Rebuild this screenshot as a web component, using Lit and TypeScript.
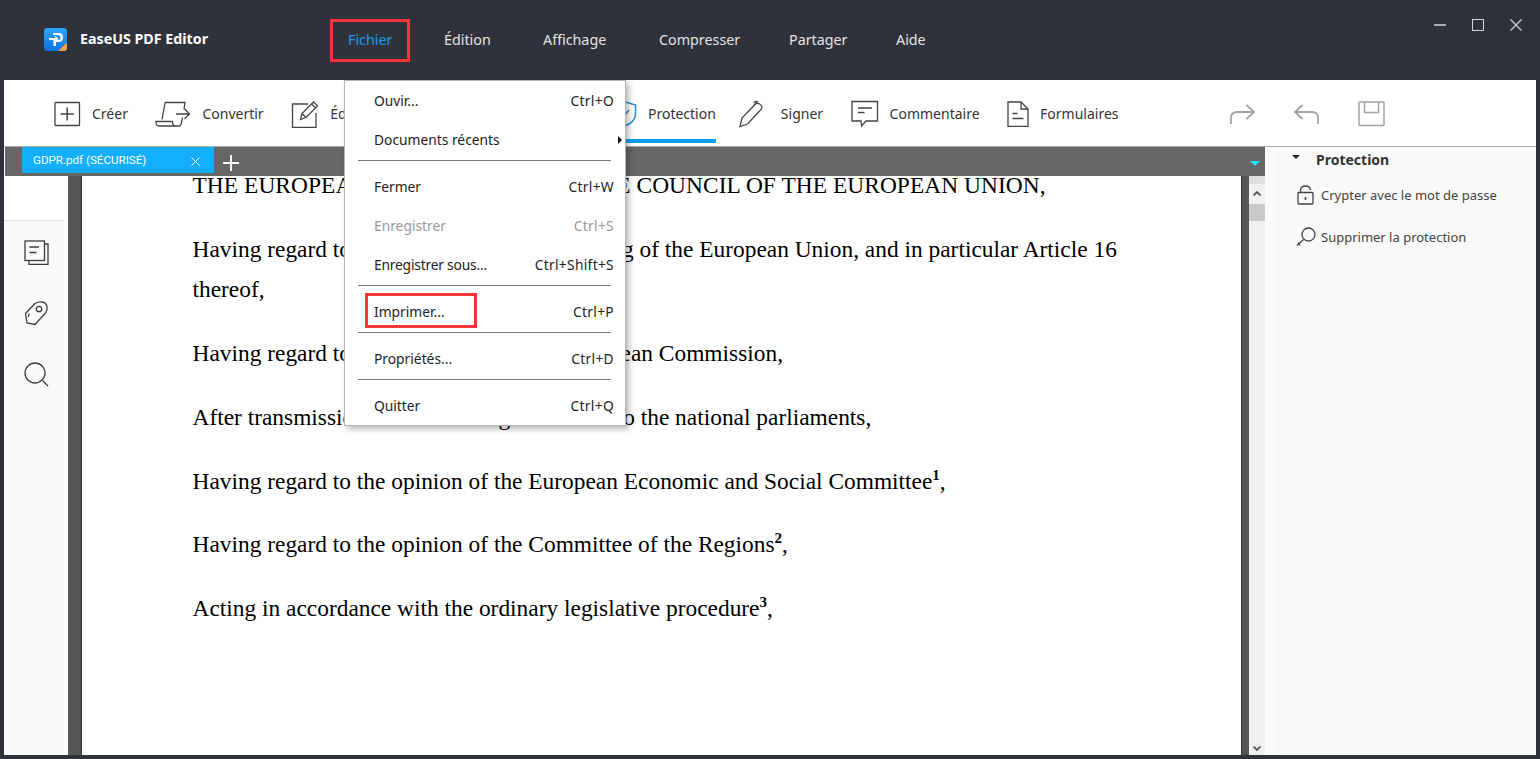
import { LitElement, html, css, svg } from "lit";
import { customElement } from "lit/decorators.js";

const S = (w: number, h: number, body: unknown, vb = "") =>
  html`<svg width=${w} height=${h} viewBox=${vb || `0 0 ${w} ${h}`} fill="none" stroke="currentColor" stroke-width="1.3">${body}</svg>`;

const icons = {
  create: S(27, 26, svg`<rect x="1" y="1.5" width="24.5" height="23" rx=".5"/><path d="M13.2 6.5v13M6.5 13h13.4" stroke-width="1.5"/>`),
  convert: S(36, 26, svg`<path d="M7 18.500 10.200 1.500H30l-1 7M27.600 16.500 26 23.500q-.5 1.500-2 1.500H4q-3 0-3-3.500V20.500h16.500q0 4.500 3 4.500"/><path d="M21 13h13M29.500 8l5 5-5 5"/>`),
  edit: S(28, 28, svg`<path d="M17 4H1.500v23.500h23.500V13"/><path d="M9.500 19.500 11 13.500 22.500 2l4 4-11.500 11.500zM11 13.500l4 4M20.500 4l4 4"/>`),
  shield: S(26, 28, svg`<path d="M13 1.500 24.500 5v9q0 8-11.500 12.500Q1.500 22 1.500 14V5z" stroke-width="1.600"/><path d="M8 13l4 4 6-7" stroke-width="1.600"/>`),
  sign: S(31, 28, svg`<path d="M1 26.500 3 18 16 4.500q2-2 4.500-.5t2.500 3q0 1.500-1.500 3L8.500 24zM1 26.500l3-1"/><path d="M14.500 2.500 17.500 1M19 1l-4 4"/>`),
  comment: S(28, 28, svg`<path d="M1 1.500h25.500v19.500H15l-4.500 5-.5-5H1z"/><path d="M7 8h14M7 12.500h6.500" stroke-width="1.500"/>`),
  form: S(22, 26, svg`<path d="M1 1h13l7 7v17.500H1zM14 1v7h7"/><path d="M5.500 12.500h5M5.500 17.500h11" stroke-width="1.500"/>`),
  redo: S(26, 22, svg`<path d="M1 21v-6q0-6 6-6h17M16.500 2l7.500 7-7.500 7" stroke-width="1.800"/>`),
  undo: S(26, 22, svg`<path d="M25 21v-6q0-6-6-6H2M9.500 2 2 9l7.500 7" stroke-width="1.800"/>`),
  save: S(27, 26, svg`<rect x="1" y="1" width="25" height="23.500" rx="1" stroke-width="1.500"/><path d="M6.500 1v10.500h14V1" stroke-width="1.500"/>`),
  pages: S(25, 25, svg`<path d="M20.500 4H24v20.500H5V21"/><rect x="1" y="1" width="19.500" height="19.500"/><path d="M5.500 7h9.500M5.500 12.500h7" stroke-width="1.500"/>`),
  tag: S(24, 25, svg`<path d="M1.500 12.500 11 2.500Q14 .7 18.500 1q4 1 4.500 5 .5 4-2 6.500L11 23.500l-8-1.500z"/><circle cx="15" cy="8" r="2.700"/><path d="M5.500 12.500Q4.500 14 4.500 16"/>`),
  search: S(25, 26, svg`<circle cx="11" cy="11" r="10"/><path d="M18.500 18.500 24 24"/>`),
  lock: S(17, 20, svg`<rect x="1" y="7.500" width="15" height="11.500" rx=".8"/><path d="M3.500 7.500V5q.5-4 5-4t5 4"/><path d="M8.500 12v3" stroke-width="1.600"/>`),
  unprotect: S(20, 20, svg`<circle cx="12.500" cy="7.500" r="6.500"/><path d="M7.500 12.500 1 18.500M2 15.500l2 3"/>`),
};

const logo = html`<svg width="23" height="23" viewBox="0 0 23 23">
  <defs><linearGradient id="lg" x1="0" y1="0" x2="0" y2="1"><stop offset="0" stop-color="#2ba6f7"/><stop offset="1" stop-color="#0b71e6"/></linearGradient></defs>
  <rect width="23" height="23" rx="3.500" fill="url(#lg)"/>
  <path d="M9 5h5.500q4.500 0 4.500 4.500t-4.500 4.500H12v4H9.500v-6h5q2 0 2-2.500t-2-2.500H9z" fill="#fff"/>
  <path d="M5 10h7l-2-2 1.500 0 3 3-3 3H10l2-2H5z" fill="#fff"/>
  <path d="M23 14.500V19.500Q23 23 19.500 23H14z" fill="#f2a33c"/>
</svg>`;

const nav = ["Fichier", "Édition", "Affichage", "Compresser", "Partager", "Aide"];

const tools = [
  { i: icons.create, t: "Créer", cls: "" },
  { i: icons.convert, t: "Convertir", cls: "" },
  { i: icons.edit, t: "Édition", cls: "" },
  { i: icons.shield, t: "Protection", cls: "active" },
  { i: icons.sign, t: "Signer", cls: "" },
  { i: icons.comment, t: "Commentaire", cls: "" },
  { i: icons.form, t: "Formulaires", cls: "" },
];

type Row = { l: string; k?: string; dis?: boolean; sub?: boolean; red?: boolean; tight?: boolean } | "sep";
const menu: Row[] = [
  { l: "Ouvir...", k: "Ctrl+O" },
  { l: "Documents récents", sub: true },
  "sep",
  { l: "Fermer", k: "Ctrl+W" },
  { l: "Enregistrer", k: "Ctrl+S", dis: true },
  { l: "Enregistrer sous...", k: "Ctrl+Shift+S", tight: true },
  "sep",
  { l: "Imprimer...", k: "Ctrl+P", red: true },
  "sep",
  { l: "Propriétés...", k: "Ctrl+D" },
  "sep",
  { l: "Quitter", k: "Ctrl+Q" },
];

@customElement("app-root")
export class AppRoot extends LitElement {
  static styles = css`
    :host {
      display: flex;
      flex-direction: column;
      position: relative;
      width: 1540px;
      height: 759px;
      overflow: hidden;
      background: #2f323b;
      font-family: "Noto Sans", "Open Sans", sans-serif;
      font-size: 14px;
      color: #333;
    }
    svg { display: block; flex: none; }

    .title { height: 80px; flex: none; display: flex; align-items: center; padding: 0 18px 0 44px; color: #e3e3e3; }
    .brand { display: flex; align-items: center; gap: 13px; width: 304px; flex: none; margin-top: -1px; color: #fff; font-weight: 700; font-size: 14.25px; }
    .brand span { position: relative; top: -1px; }
    .nav { display: grid; grid-template-columns: 96px 99px 116px 130px 107px auto; font-size: 14.3px; margin-top: -2px; }
    .nav span { position: relative; }
    .nav .cur { color: #1d9bf0; }
    .redbox { position: absolute; border: 3px solid #f6353a; box-sizing: border-box; pointer-events: none; }
    .nav .redbox { left: -18px; top: -11px; width: 80px; height: 43px; }
    .win { margin-left: auto; display: flex; gap: 26px; color: #d4d4d4; margin-top: -30px; }

    .body { flex: 1; min-height: 0; margin: 0 4px 4px; display: flex; flex-direction: column; background: #fff; }

    .tools { height: 66px; flex: none; border-bottom: 1px solid #aaa; display: flex; align-items: flex-start; padding-left: 50px; background: #fff; }
    .tool { display: flex; align-items: center; gap: 11px; margin-right: 27.5px; height: 63px; padding-top: 4px; box-sizing: border-box; color: #444; }
    .tool span { color: #333; }
    .tool.active { color: #2b8fd6; margin-left: 207.5px; margin-right: 23px; border-bottom: 4px solid #0ea0f5; padding-top: 8px; }
    .hist { margin-left: auto; margin-right: 151px; display: flex; align-items: center; gap: 37px; color: #a3a3a3; height: 63px; padding-top: 4px; box-sizing: border-box; }
    .hist svg:last-child { margin-left: 2px; }

    .work { flex: 1; min-height: 0; display: flex; }
    .main { width: 1261px; flex: none; display: flex; flex-direction: column; min-height: 0; }
    .tabs { height: 29px; flex: none; margin-left: 1px; background: #666; display: flex; align-items: flex-start; padding-left: 17px; }
    .tab { width: 192px; height: 26px; box-sizing: border-box; background: #14aeff; color: #fff; display: flex; align-items: center; justify-content: space-between; padding: 0 13px 1px 11px; font: 11.6px Roboto, "Liberation Sans", sans-serif; }
    .tab svg { margin-top: 5px; }
    .plus { margin: 8px 0 0 9px; color: #fff; }
    .drop { margin: 14px 5px 0 auto; width: 0; height: 0; border-left: 5px solid transparent; border-right: 5px solid transparent; border-top: 5px solid #19e3f5; }

    .view { flex: 1; min-height: 0; display: flex; }
    .left { width: 60px; flex: none; display: flex; flex-direction: column; background: #fff; }
    .left-top { height: 44px; flex: none; border-bottom: 1px solid #e4e4e4; }
    .left-icons { flex: 1; background: #fafafa; display: flex; flex-direction: column; align-items: center; padding: 19px 0 0 4px; gap: 36px; color: #3c3c3c; }
    .gap { width: 4px; flex: none; background: #fff; }
    .strip { width: 14px; flex: none; box-sizing: border-box; background: #555; border-right: 1px solid #333; }
    .strip.r { width: 8px; border-right: none; border-left: 1px solid #333; }
    .page { flex: 1; min-width: 0; background: #fff; overflow: hidden; padding-left: 110.5px; font: 23.4px/40px "Liberation Serif", "Times New Roman", serif; color: #000; }
    .page p { margin: 0 0 23.9px; white-space: nowrap; }
    .page p:first-child { margin-top: -11px; letter-spacing: .06px; }
    .page sup { font-size: 15px; font-weight: 700; line-height: 0; }
    .scroll { width: 16px; flex: none; background: #f0f0f0; display: flex; flex-direction: column; align-items: center; color: #555; }
    .scroll .cap { align-self: stretch; height: 8px; background: #dedede; flex: none; }
    .scroll .chev-up { margin-top: 7px; }
    .scroll .thumb { align-self: stretch; height: 17px; background: #c9c9c9; margin-top: 8px; }
    .scroll .chev-dn { margin-top: auto; margin-bottom: 4px; }

    .side { flex: 1; display: flex; background: #fbfbfb; }
    .side-in { flex: 1; margin-left: 11px; background: #f9f9f9; padding-top: 3px; font-size: 13px; color: #444; }
    .side-head { display: flex; align-items: center; height: 19px; margin-left: 16px; gap: 16px; font-weight: 700; font-size: 14px; color: #333; }
    .caret { width: 0; height: 0; border-left: 4px solid transparent; border-right: 4px solid transparent; border-top: 4px solid #222; margin-top: -5px; }
    .side-row { display: flex; align-items: center; height: 20px; margin: 0 0 22px 20px; }
    .side-head + .side-row { margin-top: 16px; }
    .side-ico { width: 25px; flex: none; }
    .side-ico.lk { padding-left: 1px; width: 24px; }

    .menu { position: absolute; left: 344px; top: 80px; width: 282px; height: 346px; box-sizing: border-box; background: #fff; border: 1px solid #b4b4b4; box-shadow: 3px 3px 6px rgba(0,0,0,.28); color: #222; font-size: 13.8px; }
    .row { height: 39px; display: flex; align-items: center; justify-content: space-between; padding: 0 11px 0 29px; position: relative; }
    .row.dis { color: #999; }
    .row.tight > span:first-child { letter-spacing: -.2px; }
    .key { letter-spacing: .3px; }
    .row .arrow { position: absolute; right: 3px; top: 16px; width: 0; height: 0; border-top: 4px solid transparent; border-bottom: 4px solid transparent; border-left: 4px solid #111; }
    .row .redbox { left: 20px; top: 1px; width: 112px; height: 35px; }
    .sep { height: 1px; background: #777; margin: 1px 14px 6px 13px; }
  `;

  render() {
    return html`
      <div class="title">
        <div class="brand">${logo}<span>EaseUS PDF Editor</span></div>
        <div class="nav">
          ${nav.map((n, i) => html`<span class=${i === 0 ? "cur" : ""}>${n}${i === 0 ? html`<i class="redbox"></i>` : ""}</span>`)}
        </div>
        <div class="win">
          ${S(12, 12, svg`<path d="M0 6h12" stroke-width="1.500"/>`)}
          ${S(12, 12, svg`<rect x=".5" y=".5" width="11" height="11" stroke-width="1"/>`)}
          ${S(12, 12, svg`<path d="M.5.5l11 11M11.500.5l-11 11" stroke-width="1.200"/>`)}
        </div>
      </div>
      <div class="body">
        <div class="tools">
          ${tools.map((t) => html`<div class="tool ${t.cls}">${t.i}<span>${t.t}</span></div>`)}
          <div class="hist">${icons.redo}${icons.undo}${icons.save}</div>
        </div>
        <div class="work">
          <div class="main">
            <div class="tabs">
              <div class="tab"><span>GDPR.pdf (SÉCURISÉ)</span>${S(10, 10, svg`<path d="M.5.5l8 8M8.500.5l-8 8" stroke-width="1"/>`)}</div>
              <div class="plus">${S(16, 16, svg`<path d="M8 0v16M0 8h16" stroke-width="2"/>`)}</div>
              <div class="drop"></div>
            </div>
            <div class="view">
              <div class="left">
                <div class="left-top"></div>
                <div class="left-icons">${icons.pages}${icons.tag}${icons.search}</div>
              </div>
              <div class="gap"></div>
              <div class="strip"></div>
              <div class="page">
                <p>THE EUROPEAN PARLIAMENT AND THE COUNCIL OF THE EUROPEAN UNION,</p>
                <p>Having regard to the Treaty on the Functioning of the European Union, and in particular Article 16<br />thereof,</p>
                <p>Having regard to the proposal from the European Commission,</p>
                <p>After transmission of the draft legislative act to the national parliaments,</p>
                <p>Having regard to the opinion of the European Economic and Social Committee<sup>1</sup>,</p>
                <p>Having regard to the opinion of the Committee of the Regions<sup>2</sup>,</p>
                <p>Acting in accordance with the ordinary legislative procedure<sup>3</sup>,</p>
              </div>
              <div class="strip r"></div>
              <div class="scroll">
                <div class="cap"></div>
                <div class="chev-up">${S(8, 5, svg`<path d="M.5 4.500l3.500-3.500 3.500 3.500" stroke-width="1.800"/>`)}</div>
                <div class="thumb"></div>
                <div class="chev-dn">${S(8, 5, svg`<path d="M.5.500l3.500 3.500 3.500-3.500" stroke-width="1.800"/>`)}</div>
              </div>
            </div>
          </div>
          <div class="side">
            <div class="side-in">
              <div class="side-head"><i class="caret"></i><span>Protection</span></div>
              <div class="side-row"><div class="side-ico lk">${icons.lock}</div><span>Crypter avec le mot de passe</span></div>
              <div class="side-row"><div class="side-ico">${icons.unprotect}</div><span>Supprimer la protection</span></div>
            </div>
          </div>
        </div>
      </div>
      <div class="menu">
        ${menu.map((r) =>
          r === "sep"
            ? html`<div class="sep"></div>`
            : html`<div class="row ${r.dis ? "dis" : ""} ${r.tight ? "tight" : ""}">
                <span>${r.l}</span><span class="key">${r.k ?? ""}</span>
                ${r.sub ? html`<i class="arrow"></i>` : ""}
                ${r.red ? html`<i class="redbox"></i>` : ""}
              </div>`
        )}
      </div>
    `;
  }
}
